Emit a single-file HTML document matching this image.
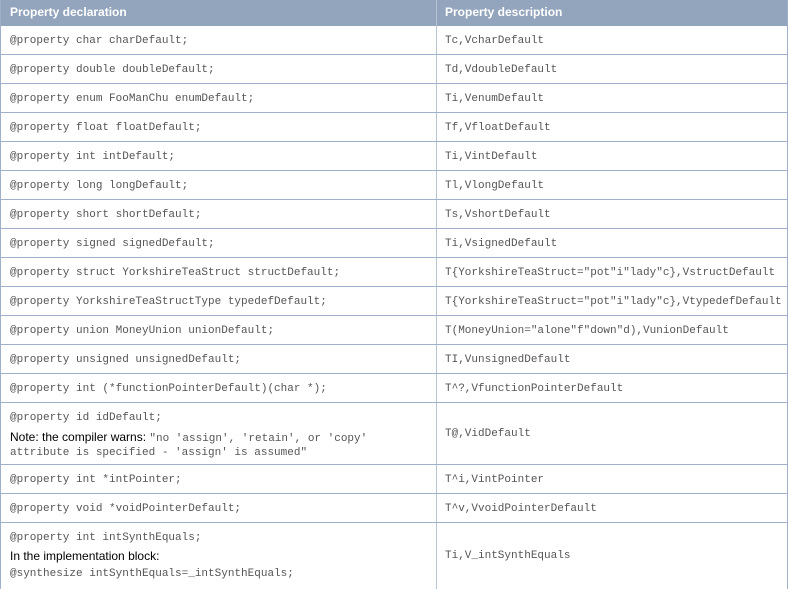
<!DOCTYPE html>
<html><head><meta charset="utf-8"><style>
*{margin:0;padding:0;box-sizing:border-box}
body{width:788px;height:589px;overflow:hidden;background:#fff;position:relative;font-family:"Liberation Sans",sans-serif}
.hd{position:absolute;left:0;top:0;width:788px;height:26px;background:#93a5bc}
.hd span{position:absolute;top:5px;color:#fff;font-weight:bold;font-size:12px}
.r{position:absolute;left:0;width:788px;border-bottom:1px solid #9fb0c8}
.c{position:absolute;font-family:"Liberation Mono",monospace;font-size:11px;color:#555;white-space:pre;margin-top:1px}
.s{font-family:"Liberation Sans",sans-serif;font-size:12px;color:#000}
.vl{position:absolute;top:0;width:1px;height:589px;background:#9fb0c8}
</style></head><body>
<div class="hd"><span style="left:10px">Property declaration</span><span style="left:445px">Property description</span></div>
<div class="vl" style="left:0"></div>
<div class="vl" style="left:436px;background:#b7c4d6"></div>
<div class="vl" style="left:787px"></div>

<div class="r" style="top:26px;height:29px"></div>
<div class="c" style="left:10px;top:34px">@property char charDefault;</div><div class="c" style="left:445px;top:34px">Tc,VcharDefault</div>
<div class="r" style="top:55px;height:29px"></div>
<div class="c" style="left:10px;top:63px">@property double doubleDefault;</div><div class="c" style="left:445px;top:63px">Td,VdoubleDefault</div>
<div class="r" style="top:84px;height:29px"></div>
<div class="c" style="left:10px;top:92px">@property enum FooManChu enumDefault;</div><div class="c" style="left:445px;top:92px">Ti,VenumDefault</div>
<div class="r" style="top:113px;height:29px"></div>
<div class="c" style="left:10px;top:121px">@property float floatDefault;</div><div class="c" style="left:445px;top:121px">Tf,VfloatDefault</div>
<div class="r" style="top:142px;height:29px"></div>
<div class="c" style="left:10px;top:150px">@property int intDefault;</div><div class="c" style="left:445px;top:150px">Ti,VintDefault</div>
<div class="r" style="top:171px;height:29px"></div>
<div class="c" style="left:10px;top:179px">@property long longDefault;</div><div class="c" style="left:445px;top:179px">Tl,VlongDefault</div>
<div class="r" style="top:200px;height:29px"></div>
<div class="c" style="left:10px;top:208px">@property short shortDefault;</div><div class="c" style="left:445px;top:208px">Ts,VshortDefault</div>
<div class="r" style="top:229px;height:29px"></div>
<div class="c" style="left:10px;top:237px">@property signed signedDefault;</div><div class="c" style="left:445px;top:237px">Ti,VsignedDefault</div>
<div class="r" style="top:258px;height:29px"></div>
<div class="c" style="left:10px;top:266px">@property struct YorkshireTeaStruct structDefault;</div><div class="c" style="left:445px;top:266px">T{YorkshireTeaStruct="pot"i"lady"c},VstructDefault</div>
<div class="r" style="top:287px;height:29px"></div>
<div class="c" style="left:10px;top:295px">@property YorkshireTeaStructType typedefDefault;</div><div class="c" style="left:445px;top:295px">T{YorkshireTeaStruct="pot"i"lady"c},VtypedefDefault</div>
<div class="r" style="top:316px;height:29px"></div>
<div class="c" style="left:10px;top:324px">@property union MoneyUnion unionDefault;</div><div class="c" style="left:445px;top:324px">T(MoneyUnion="alone"f"down"d),VunionDefault</div>
<div class="r" style="top:345px;height:29px"></div>
<div class="c" style="left:10px;top:353px">@property unsigned unsignedDefault;</div><div class="c" style="left:445px;top:353px">TI,VunsignedDefault</div>
<div class="r" style="top:374px;height:29px"></div>
<div class="c" style="left:10px;top:382px">@property int (*functionPointerDefault)(char *);</div><div class="c" style="left:445px;top:382px">T^?,VfunctionPointerDefault</div>
<div class="r" style="top:403px;height:62px"></div>
<div class="c" style="left:10px;top:411px">@property id idDefault;</div>
<div class="c" style="left:10px;top:429px"><span class="s">Note: the compiler warns: </span>"no 'assign', 'retain', or 'copy'</div>
<div class="c" style="left:10px;top:446px">attribute is specified - 'assign' is assumed"</div>
<div class="c" style="left:445px;top:427px">T@,VidDefault</div>
<div class="r" style="top:465px;height:29px"></div>
<div class="c" style="left:10px;top:473px">@property int *intPointer;</div><div class="c" style="left:445px;top:473px">T^i,VintPointer</div>
<div class="r" style="top:494px;height:29px"></div>
<div class="c" style="left:10px;top:502px">@property void *voidPointerDefault;</div><div class="c" style="left:445px;top:502px">T^v,VvoidPointerDefault</div>
<div class="r" style="top:523px;height:66px;border:none"></div>
<div class="c" style="left:10px;top:531px">@property int intSynthEquals;</div>
<div class="c s" style="left:10px;top:548px">In the implementation block:</div>
<div class="c" style="left:10px;top:567px">@synthesize intSynthEquals=_intSynthEquals;</div>
<div class="c" style="left:445px;top:549px">Ti,V_intSynthEquals</div>
</body></html>
